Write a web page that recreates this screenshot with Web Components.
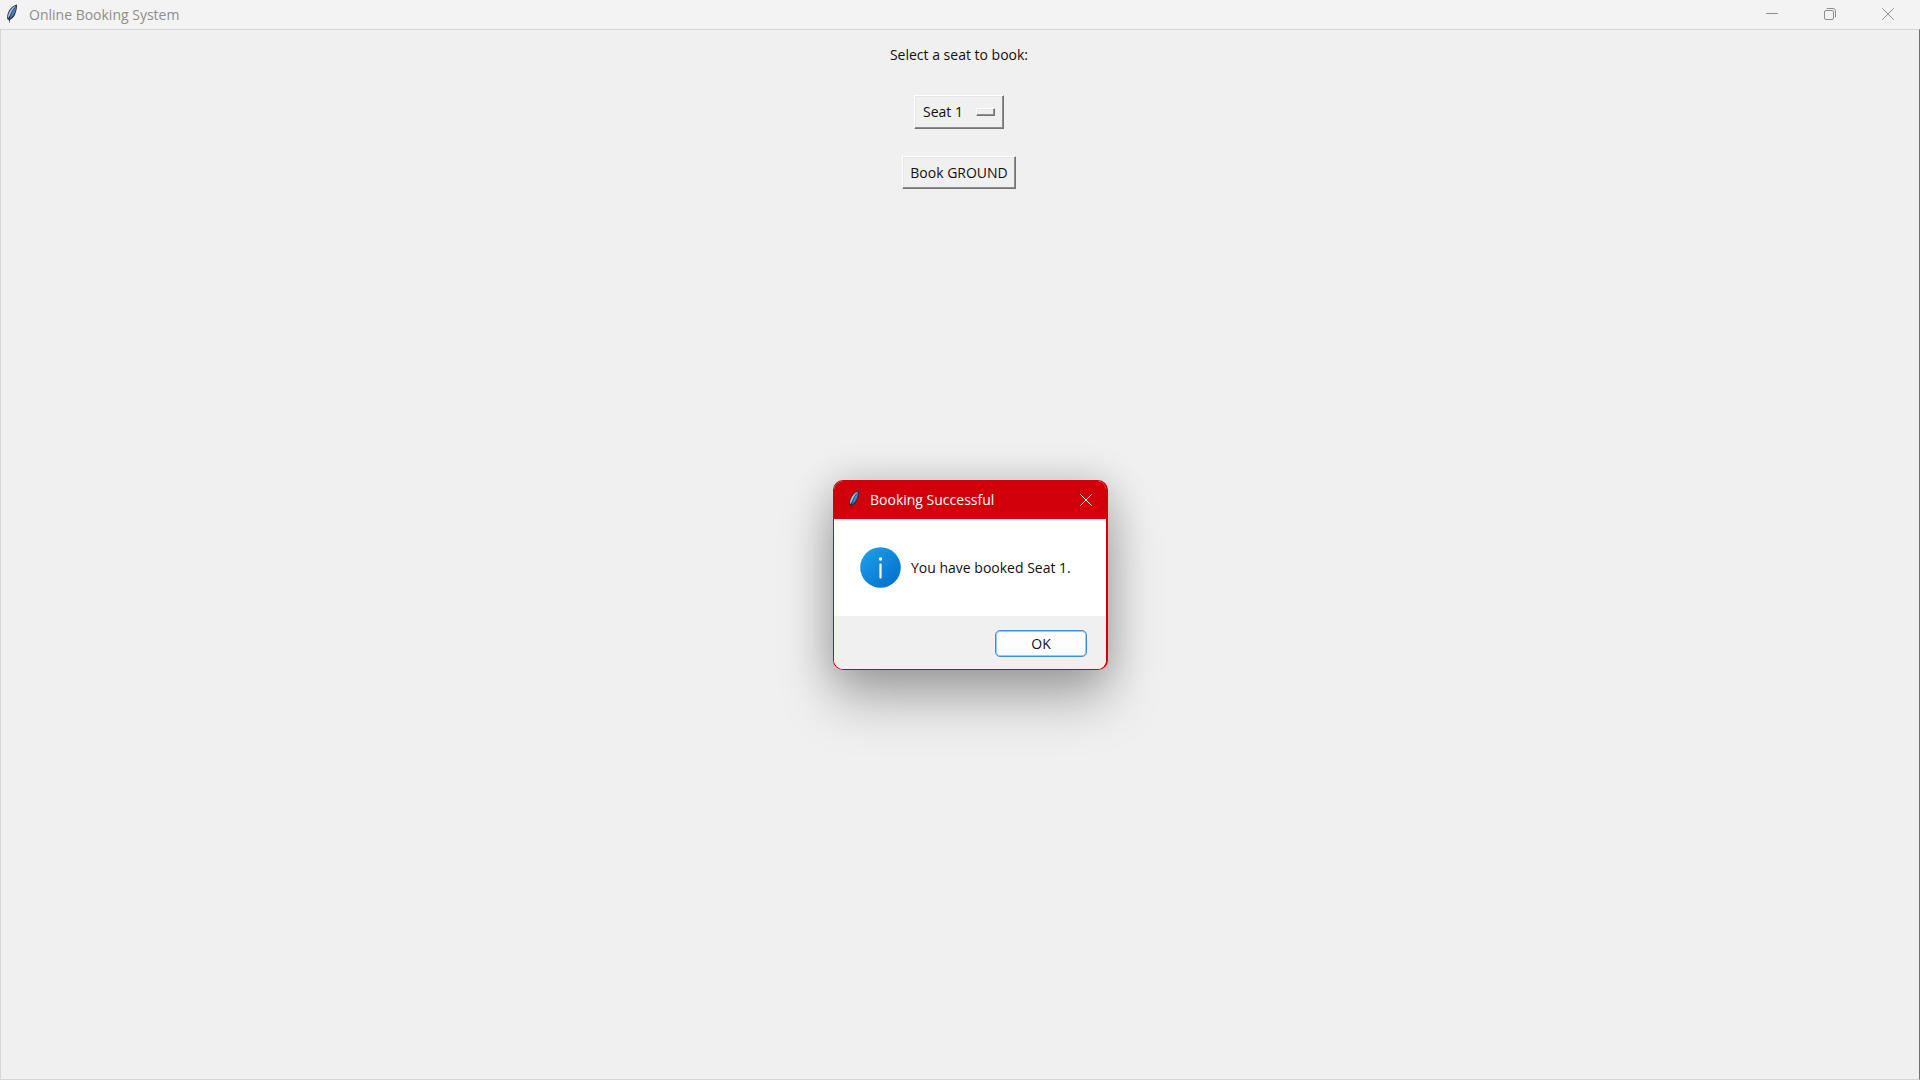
<!DOCTYPE html>
<html lang="en">
<head>
<meta charset="utf-8">
<title>Online Booking System</title>
<style>
  html, body { height: 100%; margin: 0; }
  body { font: 14px/20px "Open Sans", "Noto Sans", sans-serif; color: #111; background: #f0f0f0; }
</style>
</head>
<body>
<booking-window>
  <span slot="title">Online Booking System</span>
  <booking-form></booking-form>
</booking-window>
<message-dialog>
  <span slot="title">Booking Successful</span>
  You have booked Seat 1.
</message-dialog>

<script>
function define(name, html) {
  const template = document.createElement('template');
  template.innerHTML = html;
  customElements.define(name, class extends HTMLElement {
    constructor() {
      super();
      this.attachShadow({ mode: 'open' }).append(template.content.cloneNode(true));
    }
  });
}

define('feather-icon', `
  <style>
    :host { display: block; width: 12px; height: 20px; }
    svg { display: block; width: 100%; height: 100%; }
  </style>
  <svg viewBox="0 0 12 20" aria-hidden="true">
    <path d="M11 .4C8 .8 5 3.200 3 6.500 1.400 9.600.8 12.500 1.300 15.300l1.700.8.3 3.400.9-3.800C7.500 14 9.200 11.300 9.900 8 10.700 5.500 11.200 3 11 .4Z" fill="#2b2f38"/>
    <path d="M9.600 1.500C6.500 3 4.300 5.700 3 8.500c-.8 1.900-1.200 3.800-1 5.800L4.500 11 9.600 1.500Z" fill="#9dbde0"/>
    <path d="M10.200 1.500C9.900 6.500 8.500 11.600 3.600 14.800 4.800 10.400 7 5.500 10.200 1.500Z" fill="#4482cf"/>
    <path d="M8.300 3.800C6 7 4 11.500 3 16.500" fill="none" stroke="#243a58" stroke-width=".7"/>
  </svg>`);

define('window-icon', `
  <style>
    :host { display: block; width: 12px; height: 12px; }
    svg { display: none; width: 12px; height: 12px; fill: none; stroke: currentColor; }
    :host([name="minimize"]) .minimize,
    :host([name="restore"]) .restore,
    :host([name="close"]) .close { display: block; }
  </style>
  <svg class="minimize" viewBox="0 0 12 12"><path d="M0 5.500h12"/></svg>
  <svg class="restore" viewBox="0 0 12 12"><rect x=".5" y="2.500" width="9" height="9" rx="1.500"/><path d="M2.700.5H9a2.500 2.500 0 0 1 2.500 2.500v6.300"/></svg>
  <svg class="close" viewBox="0 0 12 12"><path d="M.3.3l11.400 11.400M11.700.3L.3 11.700"/></svg>`);

define('booking-window', `
  <style>
    :host { display: flex; flex-direction: column; min-height: 100vh; }
    header { display: flex; align-items: center; height: 29px; padding-left: 6px; background: #f3f3f3; color: #8e8e8e; }
    .title { margin-left: 11px; flex: 1; }
    nav { display: flex; align-self: stretch; padding: 0 3px 1px 0; }
    button { display: grid; place-items: center; width: 58px; padding: 0; border: 0; background: none; color: inherit; }
    feather-icon { margin-bottom: 2px; }
    main { flex: 1; border: 1px solid #d5d5d5; border-right-color: #707070; }
  </style>
  <header>
    <feather-icon></feather-icon>
    <div class="title"><slot name="title"></slot></div>
    <nav>
      <button aria-label="Minimize"><window-icon name="minimize"></window-icon></button>
      <button aria-label="Restore"><window-icon name="restore"></window-icon></button>
      <button aria-label="Close"><window-icon name="close"></window-icon></button>
    </nav>
  </header>
  <main><slot></slot></main>`);

define('booking-form', `
  <style>
    :host { display: flex; flex-direction: column; align-items: center; padding: 15px 2px 0 0; }
    select, button {
      box-sizing: border-box; font: inherit; color: inherit; background: #f0f0f0;
      appearance: none; border-radius: 0; margin: 0;
    }
    select, button, .handle {
      border: 1px solid; border-color: #fff #747474 #747474 #fff;
      box-shadow: inset -1px -1px #8e8e8e, inset 1px 1px #e6e6e6;
    }
    .menu { display: grid; align-items: center; margin: 30px 0 27px; }
    .menu > * { grid-area: 1 / 1; }
    select { width: 90px; height: 34px; padding: 0 0 0 8px; }
    .handle { justify-self: end; margin-right: 9px; width: 17px; height: 6px; pointer-events: none; }
    button { height: 33px; padding: 0 7px; }
  </style>
  <label for="seat">Select a seat to book:</label>
  <div class="menu">
    <select id="seat"><option>Seat 1</option></select>
    <span class="handle"></span>
  </div>
  <button>Book GROUND</button>`);

define('message-dialog', `
  <style>
    :host {
      position: absolute; left: 833px; top: 480px; width: 275px;
      box-sizing: border-box; overflow: hidden;
      border: 1px solid #d1000b; border-right-width: 2px; border-radius: 10px;
      background: #fff;
      box-shadow: 0 30px 54px rgba(0,0,0,.28), 0 2px 40px rgba(0,0,0,.19);
    }
    header { display: flex; align-items: center; height: 38px; padding: 0 14px; background: #d1000b; color: #fff; }
    .title { flex: 1; margin-left: 10px; }
    .close { padding: 0; border: 0; background: none; color: inherit; }
    .body { display: flex; align-items: center; gap: 10px; height: 97px; padding: 0 26px; box-sizing: border-box; }
    .info { width: 41px; height: 41px; flex: none; }
    .message { white-space: nowrap; }
    footer { display: flex; justify-content: flex-end; padding: 14px 19px 12px; background: #f0f0f0; }
    .ok { width: 92px; height: 27px; padding: 0; font: inherit; color: inherit; background: #fdfdfd; border: 1px solid #3a8fd6; box-shadow: inset 0 0 0 1px #9cc9ee; border-radius: 5px; }
  </style>
  <header>
    <feather-icon></feather-icon>
    <div class="title"><slot name="title"></slot></div>
    <button class="close" aria-label="Close"><window-icon name="close"></window-icon></button>
  </header>
  <div class="body">
    <svg class="info" viewBox="0 0 41 41" aria-hidden="true">
      <defs><linearGradient id="g" x1="0" y1="0" x2="1" y2="1"><stop offset=".1" stop-color="#1e9de4"/><stop offset=".9" stop-color="#0270d0"/></linearGradient></defs>
      <circle cx="20.500" cy="20.500" r="20.300" fill="url(#g)"/>
      <circle cx="20.500" cy="12" r="1.700" fill="#fff"/>
      <rect x="19.400" y="16.500" width="2.200" height="15" rx="1" fill="#fff"/>
    </svg>
    <div class="message"><slot></slot></div>
  </div>
  <footer><button class="ok">OK</button></footer>`);
</script>
</body>
</html>
